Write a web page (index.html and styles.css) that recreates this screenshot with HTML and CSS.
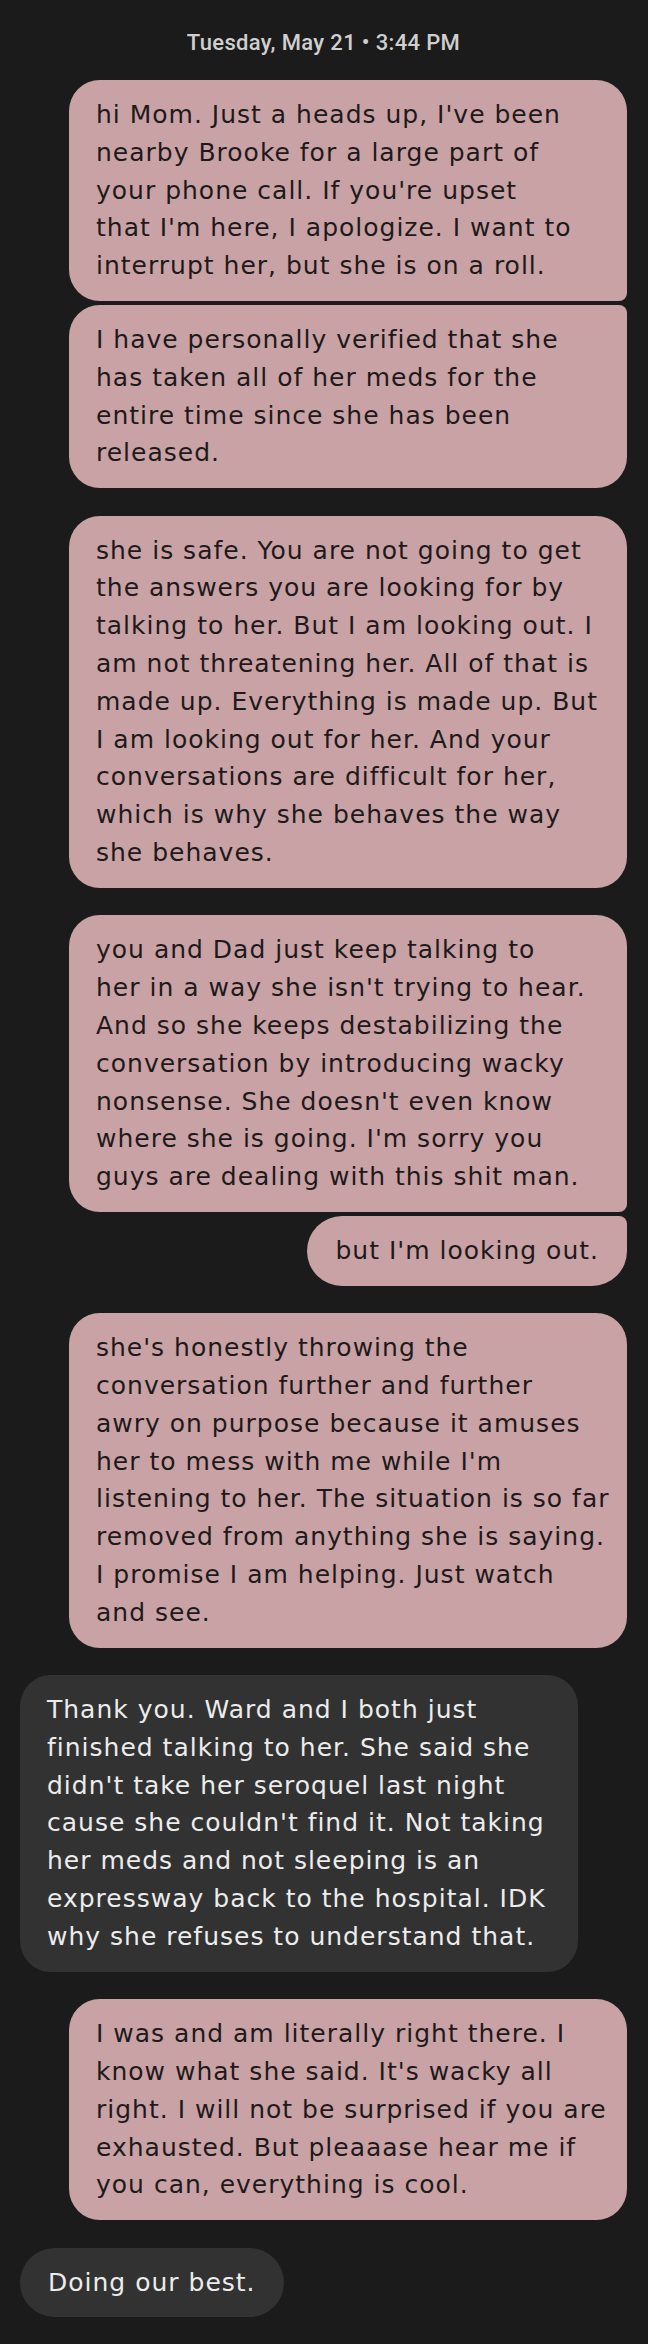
FILE: index.html
```html
<!DOCTYPE html>
<html>
<head>
<meta charset="utf-8">
<link rel="stylesheet" href="styles.css">
</head>
<body>
<main class="thread">
  <div class="stamp">Tuesday, May 21 • 3:44 PM</div>

  <div class="group out">
    <div class="bubble wide first">hi Mom. Just a heads up, I've been<br>nearby Brooke for a large part of<br>your phone call. If you're upset<br>that I'm here, I apologize. I want to<br>interrupt her, but she is on a roll.</div>
    <div class="bubble wide last">I have personally verified that she<br>has taken all of her meds for the<br>entire time since she has been<br>released.</div>
  </div>

  <div class="group out">
    <div class="bubble wide">she is safe. You are not going to get<br>the answers you are looking for by<br>talking to her. But I am looking out. I<br>am not threatening her. All of that is<br>made up. Everything is made up. But<br>I am looking out for her. And your<br>conversations are difficult for her,<br>which is why she behaves the way<br>she behaves.</div>
  </div>

  <div class="group out">
    <div class="bubble wide first">you and Dad just keep talking to<br>her in a way she isn't trying to hear.<br>And so she keeps destabilizing the<br>conversation by introducing wacky<br>nonsense. She doesn't even know<br>where she is going. I'm sorry you<br>guys are dealing with this shit man.</div>
    <div class="bubble last short">but I'm looking out.</div>
  </div>

  <div class="group out">
    <div class="bubble wide">she's honestly throwing the<br>conversation further and further<br>awry on purpose because it amuses<br>her to mess with me while I'm<br>listening to her. The situation is so far<br>removed from anything she is saying.<br>I promise I am helping. Just watch<br>and see.</div>
  </div>

  <div class="group in">
    <div class="bubble wide">Thank you. Ward and I both just<br>finished talking to her. She said she<br>didn't take her seroquel last night<br>cause she couldn't find it. Not taking<br>her meds and not sleeping is an<br>expressway back to the hospital. IDK<br>why she refuses to understand that.</div>
  </div>

  <div class="group out">
    <div class="bubble wide">I was and am literally right there. I<br>know what she said. It's wacky all<br>right. I will not be surprised if you are<br>exhausted. But pleaaase hear me if<br>you can, everything is cool.</div>
  </div>

  <div class="group in">
    <div class="bubble short">Doing our best.</div>
  </div>
</main>
</body>
</html>
```

FILE: styles.css
```css
html, body {
  margin: 0;
  padding: 0;
  background: #1b1b1b;
}

.thread {
  width: 648px;
  min-height: 2344px;
  box-sizing: border-box;
  padding: 30px 21px 0 20px;
  display: flex;
  flex-direction: column;
  gap: 27.5px;
}

.stamp {
  text-align: center;
  color: #cfcfcf;
  font-family: Roboto, "Noto Sans", sans-serif;
  font-size: 22px;
  line-height: 26px;
  font-weight: 500;
  letter-spacing: 0.35px;
  margin-bottom: -3.5px;
}

.group {
  display: flex;
  flex-direction: column;
  gap: 4px;
}

.group.out {
  align-items: flex-end;
}

.group.in {
  align-items: flex-start;
}

.bubble {
  box-sizing: border-box;
  padding: 16px 27px;
  font-family: "DejaVu Sans", Roboto, sans-serif;
  font-size: 25px;
  letter-spacing: 1px;
  line-height: 37.8px;
  border-radius: 31px;
  white-space: nowrap;
}

.bubble.wide {
  width: 558px;
}

.out .bubble {
  background: #c9a2a5;
  color: #1e1a1b;
}

.in .bubble {
  background: #323232;
  color: #ececec;
}

.out .bubble.first {
  border-bottom-right-radius: 8px;
}

.out .bubble.last {
  border-top-right-radius: 8px;
}

.bubble.short {
  padding: 16px 28px;
  border-radius: 35px;
}

.out .bubble.short.last {
  border-top-right-radius: 8px;
}
```
